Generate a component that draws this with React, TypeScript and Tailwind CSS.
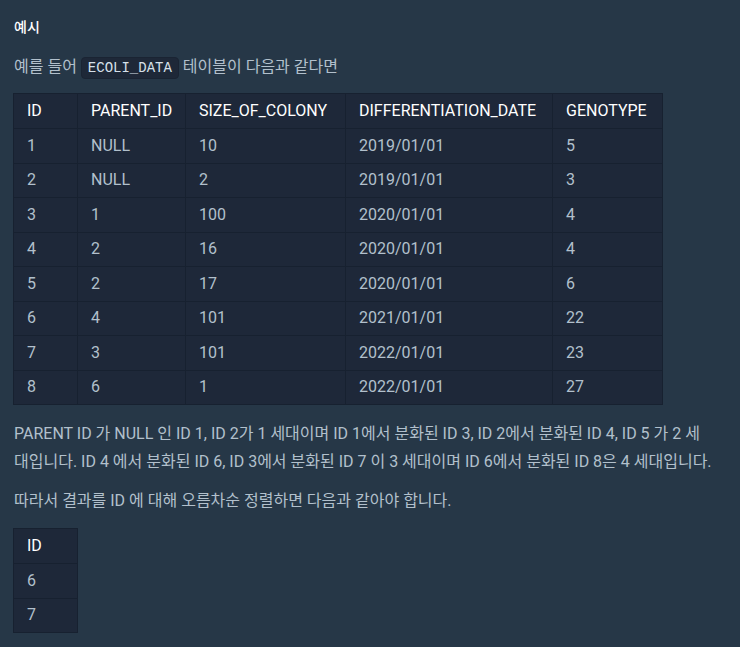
import React from "react";

const rows = [
  ["1", "NULL", "10", "2019/01/01", "5"],
  ["2", "NULL", "2", "2019/01/01", "3"],
  ["3", "1", "100", "2020/01/01", "4"],
  ["4", "2", "16", "2020/01/01", "4"],
  ["5", "2", "17", "2020/01/01", "6"],
  ["6", "4", "101", "2021/01/01", "22"],
  ["7", "3", "101", "2022/01/01", "23"],
  ["8", "6", "1", "2022/01/01", "27"],
];

const headers = ["ID", "PARENT_ID", "SIZE_OF_COLONY", "DIFFERENTIATION_DATE", "GENOTYPE"];
const widths = ["w-[64px]", "w-[108px]", "w-[160px]", "w-[207px]", "w-[110px]"];

export default function App() {
  return (
    <div
      className="min-h-screen bg-[#263747] text-[#b2c0cc] pl-[14px] pr-[6px] py-[13px] text-[16px]"
      style={{ fontFamily: 'Roboto, "Noto Sans CJK KR", sans-serif' }}
    >
      <div className="font-medium text-white leading-[28px] text-[14px]">예시</div>

      <p className="mt-[12px] leading-[28px]">
        예를 들어{" "}
        <code className="inline-block rounded-[4px] border border-[#1a2433] bg-[#1e2838] px-[6px] leading-[20px] text-[14px] text-[#d6e0ea] font-['Liberation_Mono',monospace]">
          ECOLI_DATA
        </code>{" "}
        테이블이 다음과 같다면
      </p>

      <table className="mt-[12px] -ml-px border-collapse table-fixed w-[650px] bg-[#1e2839]">
        <colgroup>
          {widths.map((w, i) => (
            <col key={i} className={w} />
          ))}
        </colgroup>
        <thead>
          <tr>
            {headers.map((h) => (
              <th
                key={h}
                className="h-[35px] border border-[#172130] px-[13px] text-left font-normal text-white"
              >
                {h}
              </th>
            ))}
          </tr>
        </thead>
        <tbody>
          {rows.map((r) => (
            <tr key={r[0]}>
              {r.map((c, i) => (
                <td key={i} className="h-[34.5px] border border-[#172130] px-[13px]">
                  {c}
                </td>
              ))}
            </tr>
          ))}
        </tbody>
      </table>

      <p className="mt-[15px] leading-[28px]">
        PARENT ID 가 NULL 인 ID 1, ID 2가 1 세대이며 ID 1에서 분화된 ID 3, ID 2에서 분화된 ID 4, ID 5 가 2 세
        <br />
        대입니다. ID 4 에서 분화된 ID 6, ID 3에서 분화된 ID 7 이 3 세대이며 ID 6에서 분화된 ID 8은 4 세대입니다.
      </p>

      <p className="mt-[11px] leading-[28px]">따라서 결과를 ID 에 대해 오름차순 정렬하면 다음과 같아야 합니다.</p>

      <table className="mt-[13px] -ml-px border-collapse table-fixed w-[65px] bg-[#1e2839]">
        <thead>
          <tr>
            <th className="h-[35px] border border-[#172130] px-[13px] text-left font-normal text-white">ID</th>
          </tr>
        </thead>
        <tbody>
          {["6", "7"].map((v) => (
            <tr key={v}>
              <td className="h-[34.5px] border border-[#172130] px-[13px]">{v}</td>
            </tr>
          ))}
        </tbody>
      </table>
    </div>
  );
}
